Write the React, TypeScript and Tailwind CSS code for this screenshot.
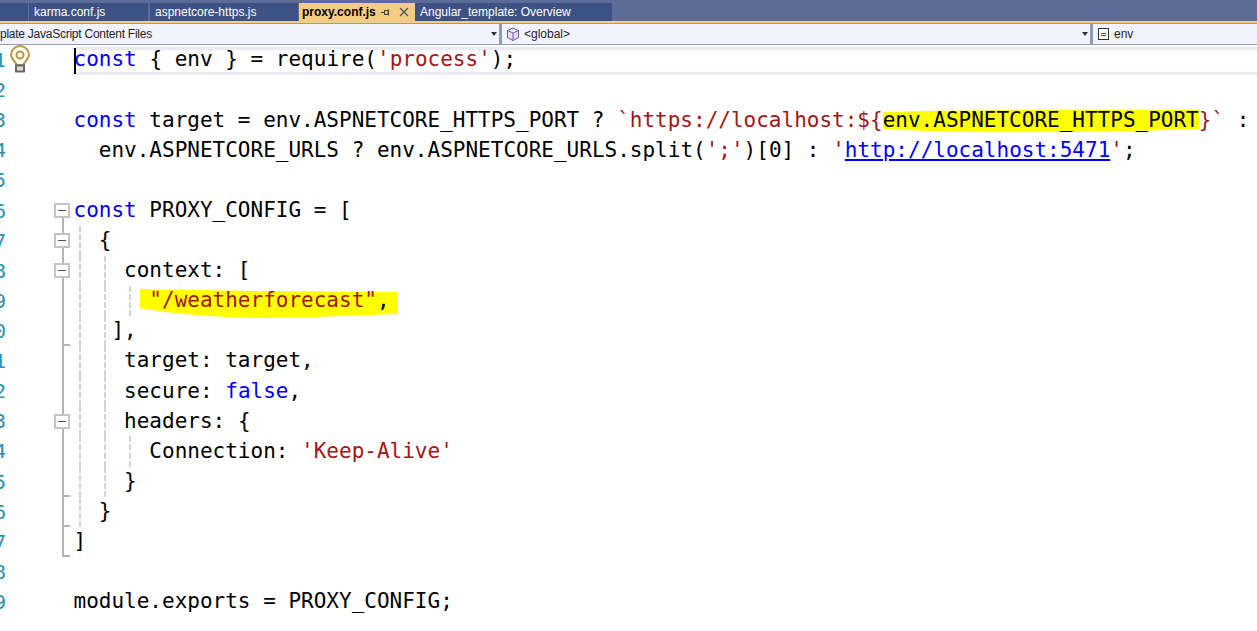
const mono = "font-['DejaVu_Sans_Mono','Liberation_Mono',monospace]";

function Tab({ label, w, active }: { label: string; w: string; active?: boolean }) {
  return (
    <div className={`${w} h-full flex items-center text-xs ${active ? 'pl-[3px] bg-[#f5cc84] text-black font-bold' : 'pl-[5px] bg-[#3d5284] text-white'}`}>
      {label}
      {active && (
        <span className="ml-auto flex items-center gap-[9px] pr-[6px] font-normal">
          <svg width="9" height="9" viewBox="0 0 9 9" fill="none" stroke="#444">
            <path d="M3.500 2v5M3.500 2.500h3.500v4h-3.500M0 4.500h3.500M7.500 1.500v6" />
          </svg>
          <svg width="10" height="10" viewBox="0 0 10 10" fill="none" stroke="#555" strokeWidth="1.300">
            <path d="M1 1l8 8M9 1L1 9" />
          </svg>
        </span>
      )}
    </div>
  );
}

function Fold({ top, bottom }: { top?: boolean; bottom?: boolean }) {
  return (
    <div className="relative w-4 h-full flex items-center justify-center">
      {top && <div className="absolute left-[8px] top-0 h-[8px] w-[2px] bg-[#b4b4b4]" />}
      {bottom && <div className="absolute left-[8px] bottom-0 h-[8px] w-[2px] bg-[#b4b4b4]" />}
      <div className="relative w-[16px] h-[15px] border-2 border-[#c4c4c4] bg-white flex items-center justify-center">
        <div className="w-[8px] h-[1px] bg-[#555]" />
      </div>
    </div>
  );
}

// tick = the fold block closes at the bottom of this row, last = the line stops there too
function Line({ tick, last }: { tick?: boolean; last?: boolean }) {
  return (
    <div className="relative w-4 h-full">
      <div className="absolute left-[8px] top-0 h-full w-[2px] bg-[#b4b4b4]" />
      {(tick || last) && <div className="absolute left-[8px] bottom-0 w-[8px] h-[2px] bg-[#b4b4b4]" />}
    </div>
  );
}

function Guides({ at }: { at: number[] }) {
  return (
    <>
      {at.map((x) => (
        <div
          key={x}
          style={{ left: x }}
          className="absolute top-0 bottom-0 border-l-2 border-dashed border-[#d4d4d4]"
        />
      ))}
    </>
  );
}

const K = ({ children }: { children: React.ReactNode }) => <span className="text-[#0000ff]">{children}</span>;
const S = ({ children }: { children: React.ReactNode }) => <span className="text-[#a31515]">{children}</span>;

const rows: { gutter?: React.ReactNode; guides?: number[]; code?: React.ReactNode }[] = [
  { code: <><K>const</K> {'{'} env {'}'} = require(<S>'process'</S>);</> },
  {},
  {
    code: (
      <>
        <K>const</K> target = env.ASPNETCORE_HTTPS_PORT ? <S>`https://localhost:${'{'}</S>
        <span className="relative">
          {/* hand drawn marker stroke */}
          <svg className="absolute left-0 top-[1px] w-full h-[24px]" viewBox="0 0 316 24" preserveAspectRatio="none" fill="#ffff00">
            <path d="M0 3 Q120 0 316 1 L316 20 Q200 24 90 23 Q30 22 0 20Z" />
          </svg>
          <span className="relative">env.ASPNETCORE_HTTPS_PORT</span>
        </span>
        <S>{'}'}`</S> :
      </>
    ),
  },
  {
    code: (
      <>
        {'  '}env.ASPNETCORE_URLS ? env.ASPNETCORE_URLS.split(<S>';'</S>)[0] : <S>'</S>
        <span className="text-[#0000ff] underline">http://localhost:5471</span>
        <S>'</S>;
      </>
    ),
  },
  {},
  { gutter: <Fold bottom />, code: <><K>const</K> PROXY_CONFIG = [</> },
  { gutter: <Fold top bottom />, guides: [5], code: <>{'  '}{'{'}</> },
  { gutter: <Fold top bottom />, guides: [5, 30], code: <>{'    '}context: [</> },
  {
    gutter: <Line />,
    guides: [5, 30, 55],
    code: (
      <>
        {'      '}
        <span className="relative">
          <svg className="absolute left-[-9px] top-[1px] w-[258px] h-[30px]" viewBox="0 0 258 30" preserveAspectRatio="none" fill="#ffff00">
            <path d="M0 0 L120 2 L258 3 L258 25 Q190 28 120 29 Q50 28 0 19Z" />
          </svg>
          <span className="relative">
            <S>"/weatherforecast"</S>,
          </span>
        </span>
      </>
    ),
  },
  { gutter: <Line tick />, guides: [5, 30], code: <>{'   '}],</> },
  { gutter: <Line />, guides: [5, 30], code: <>{'    '}target: target,</> },
  { gutter: <Line />, guides: [5, 30], code: <>{'    '}secure: <K>false</K>,</> },
  { gutter: <Fold top bottom />, guides: [5, 30], code: <>{'    '}headers: {'{'}</> },
  { gutter: <Line />, guides: [5, 30, 55], code: <>{'      '}Connection: <S>'Keep-Alive'</S></> },
  { gutter: <Line tick />, guides: [5, 30], code: <>{'    '}{'}'}</> },
  { gutter: <Line tick />, guides: [5], code: <>{'  '}{'}'}</> },
  { gutter: <Line last />, code: <>]</> },
  {},
  { code: <>module.exports = PROXY_CONFIG;</> },
];

export default function App() {
  return (
    <div className="w-[1257px] h-[631px] overflow-hidden bg-white flex flex-col font-['Liberation_Sans',sans-serif]">
      {/* tab well */}
      <div className="h-[21px] bg-[#5d6b99] flex pt-[3px]">
        <Tab label="" w="w-[28px] mr-[1px]" />
        <Tab label="karma.conf.js" w="w-[119px] mr-[2px]" />
        <Tab label="aspnetcore-https.js" w="w-[148px] mr-[1px]" />
        <Tab label="proxy.conf.js" w="w-[116px]" active />
        <Tab label="Angular_template: Overview" w="w-[197px]" />
      </div>
      <div className="h-[2px] bg-[#f5cc84]" />

      {/* navigation bar */}
      <div className="h-[22px] bg-[#8d9bbc] flex gap-[3px] py-[1px] text-xs text-[#1e1e1e]">
        <div className="w-[499px] bg-[#f1f4fd] flex items-center overflow-hidden">
          <span className="whitespace-nowrap tracking-[-0.25px]">plate JavaScript Content Files</span>
          <span className="ml-auto mr-[2px] w-0 h-0 border-x-[3px] border-t-[4px] border-x-transparent border-t-[#333]" />
        </div>
        <div className="w-[588px] bg-[#f1f4fd] flex items-center pl-1 gap-1">
          <svg width="14" height="15" viewBox="0 0 14 15" fill="#e6dcf4" stroke="#7a52a8">
            <path d="M7 1l5.500 2.500v7L7 13.500 1.500 10.500v-7zM1.500 3.500L7 6l5.500-2.500M7 6v7.500" />
          </svg>
          <span>&lt;global&gt;</span>
          <span className="ml-auto mr-[2px] w-0 h-0 border-x-[3px] border-t-[4px] border-x-transparent border-t-[#333]" />
        </div>
        <div className="flex-1 bg-[#f1f4fd] flex items-center pl-[5px] gap-[5px]">
          <span className="w-[11px] h-[12px] border border-[#333] flex flex-col items-center justify-center gap-[1px] bg-white">
            <span className="w-[5px] h-[1px] bg-[#0066cc]" />
            <span className="w-[5px] h-[1px] bg-[#0066cc]" />
          </span>
          <span>env</span>
        </div>
      </div>

      {/* editor */}
      <div className={`relative flex-1 ${mono} text-[21px] text-black`}>
        <div className="absolute left-[72px] right-0 top-[2px] h-[28px] border-y-[3px] border-[#eaeaf2]" />
        <div className="relative">
          {rows.map((row, i) => (
            <div key={i} className="flex h-[30.12px] items-center">
              <div className="w-[6px] h-full overflow-hidden flex justify-end items-center text-[#2b91af] text-xl">
                <span className="shrink-0">{i + 1}</span>
              </div>
              <div className="w-[48px] h-full relative">
                {i === 0 && (
                  <svg className="absolute left-[4px] top-0" width="20" height="28" viewBox="0 0 20 28" fill="#fffdf2" stroke="#b5964a" strokeWidth="2">
                    <path d="M6.500 20c0-3.500-5.500-5-5.500-10a9 9 0 0 1 18 0c0 5-5.500 6.500-5.500 10z" />
                    <circle cx="10" cy="10" r="3.500" fill="none" />
                    <path d="M6 20.500h8v6H6z" fill="#ddd" stroke="#666" />
                  </svg>
                )}
              </div>
              <div className="w-[20px] h-full flex justify-start">{row.gutter}</div>
              <div className="relative flex-1 h-full flex items-center whitespace-pre -ml-[0.5px]">
                {row.guides && <Guides at={row.guides} />}
                <span className="relative">{row.code}</span>
              </div>
            </div>
          ))}
        </div>
        <div className="absolute left-[74px] top-[3px] h-[26px] w-[2px] bg-black" />
      </div>
    </div>
  );
}
